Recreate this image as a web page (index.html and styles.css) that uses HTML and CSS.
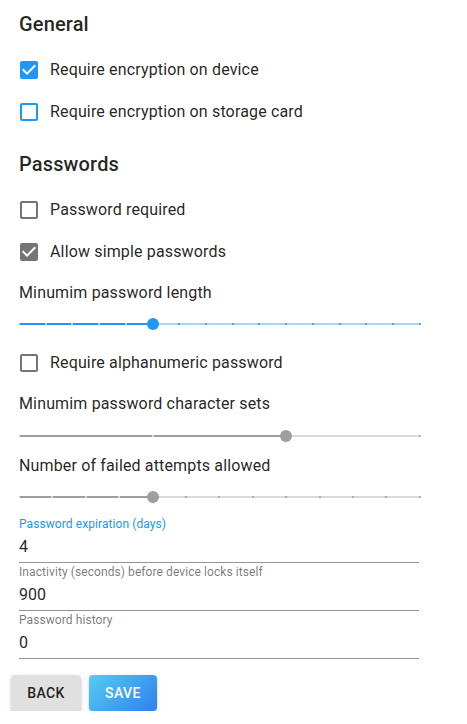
FILE: index.html
```html
<!DOCTYPE html>
<html lang="en">
<head>
<meta charset="utf-8">
<title>Policy</title>
<link rel="stylesheet" href="styles.css">
</head>
<body>
<main class="page">
  <h2 class="section-title">General</h2>
  <div class="check-list first">
    <label class="check-row">
      <svg class="cb cb-blue" viewBox="0 0 24 24"><path d="M19 3H5c-1.11 0-2 .9-2 2v14c0 1.1.89 2 2 2h14c1.11 0 2-.9 2-2V5c0-1.1-.89-2-2-2zm-9 14l-5-5 1.41-1.41L10 14.17l7.59-7.59L19 8l-9 9z"/></svg>
      <span>Require encryption on device</span>
    </label>
    <label class="check-row">
      <svg class="cb cb-blue" viewBox="0 0 24 24"><path d="M19 5v14H5V5h14m0-2H5c-1.1 0-2 .9-2 2v14c0 1.1.9 2 2 2h14c1.1 0 2-.9 2-2V5c0-1.1-.9-2-2-2z"/></svg>
      <span>Require encryption on storage card</span>
    </label>
  </div>

  <h2 class="section-title second">Passwords</h2>
  <div class="check-list first">
    <label class="check-row">
      <svg class="cb cb-grey" viewBox="0 0 24 24"><path d="M19 5v14H5V5h14m0-2H5c-1.1 0-2 .9-2 2v14c0 1.1.9 2 2 2h14c1.1 0 2-.9 2-2V5c0-1.1-.9-2-2-2z"/></svg>
      <span>Password required</span>
    </label>
    <label class="check-row">
      <svg class="cb cb-grey" viewBox="0 0 24 24"><path d="M19 3H5c-1.11 0-2 .9-2 2v14c0 1.1.89 2 2 2h14c1.11 0 2-.9 2-2V5c0-1.1-.89-2-2-2zm-9 14l-5-5 1.41-1.41L10 14.17l7.59-7.59L19 8l-9 9z"/></svg>
      <span>Allow simple passwords</span>
    </label>
  </div>

  <div class="slider-label l1">Minumim password length</div>
  <div class="slider s-blue g1">
    <div class="rail"></div>
    <div class="track" style="width:33.333%"></div>
    <div class="marks">
      <i class="on"></i><i class="on"></i><i class="on"></i><i class="on"></i><i class="on"></i><i class="on"></i>
      <i></i><i></i><i></i><i></i><i></i><i></i><i></i><i></i><i></i><i></i>
    </div>
    <div class="thumb" style="left:33.333%"></div>
  </div>

  <label class="check-row g2">
    <svg class="cb cb-grey" viewBox="0 0 24 24"><path d="M19 5v14H5V5h14m0-2H5c-1.1 0-2 .9-2 2v14c0 1.1.9 2 2 2h14c1.1 0 2-.9 2-2V5c0-1.1-.9-2-2-2z"/></svg>
    <span>Require alphanumeric password</span>
  </label>

  <div class="slider-label g3">Minumim password character sets</div>
  <div class="slider s-grey g4">
    <div class="rail"></div>
    <div class="track" style="width:66.667%"></div>
    <div class="marks">
      <i class="on"></i><i class="on"></i><i class="on"></i><i></i>
    </div>
    <div class="thumb" style="left:66.667%"></div>
  </div>

  <div class="slider-label g3">Number of failed attempts allowed</div>
  <div class="slider s-grey g1">
    <div class="rail"></div>
    <div class="track" style="width:33.333%"></div>
    <div class="marks">
      <i class="on"></i><i class="on"></i><i class="on"></i><i class="on"></i><i class="on"></i>
      <i></i><i></i><i></i><i></i><i></i><i></i><i></i><i></i>
    </div>
    <div class="thumb" style="left:33.333%"></div>
  </div>

  <div class="fields">
    <div class="field">
      <div class="field-label focused">Password expiration (days)</div>
      <div class="field-value">4</div>
    </div>
    <div class="field">
      <div class="field-label">Inactivity (seconds) before device locks itself</div>
      <div class="field-value">900</div>
    </div>
    <div class="field">
      <div class="field-label">Password history</div>
      <div class="field-value">0</div>
    </div>
  </div>

  <div class="actions">
    <button class="btn btn-back">Back</button>
    <button class="btn btn-save">Save</button>
  </div>
</main>
</body>
</html>
```

FILE: styles.css
```css
* { box-sizing: border-box; }

html, body {
  margin: 0;
  padding: 0;
  background: #ffffff;
}

body {
  font-family: Roboto, "Liberation Sans", Arial, sans-serif;
  color: rgba(0, 0, 0, 0.87);
  font-size: 16px;
}

.page {
  display: flex;
  flex-direction: column;
  padding: 12px 0 0 19px;
}

.section-title {
  margin: 0;
  font-size: 20px;
  line-height: 24px;
  font-weight: 500;
  letter-spacing: 0.15px;
}

.section-title.second { margin-top: 19px; }

.check-list {
  display: flex;
  flex-direction: column;
}

.check-list.first { margin-top: 13px; }

.check-row {
  height: 42px;
  display: flex;
  align-items: center;
  font-size: 16px;
  line-height: 20px;
  letter-spacing: 0.15px;
}

.cb {
  width: 24px;
  height: 24px;
  margin-left: -2px;
  margin-right: 9px;
  flex: none;
}

.cb-blue { fill: #2196f3; }
.cb-grey { fill: #757575; }

.slider-label {
  font-size: 16px;
  line-height: 20px;
  letter-spacing: 0.15px;
}

.l1 { margin-top: 10px; }
.g1 { margin-top: 11px; }
.g2 { margin-top: 8px; }
.g3 { margin-top: 10px; }
.g4 { margin-top: 12px; }

.slider {
  position: relative;
  width: 401px;
  height: 20px;
}

.rail, .track {
  position: absolute;
  left: 0;
  top: 9px;
  height: 2px;
}

.rail { width: 100%; }

.marks {
  position: absolute;
  left: -1px;
  right: -1px;
  top: 9px;
  height: 2px;
  display: flex;
  justify-content: space-between;
}

.marks i {
  display: block;
  width: 2px;
  height: 2px;
  border-radius: 1px;
}

.thumb {
  position: absolute;
  top: 4px;
  width: 12px;
  height: 12px;
  margin-left: -6px;
  border-radius: 50%;
}

.s-blue .rail { background: #a6d5fa; }
.s-blue .track { background: #2196f3; }
.s-blue .marks i { background: #2196f3; }
.s-blue .thumb { background: #2196f3; }

.s-grey .rail { background: #dadada; }
.s-grey .track { background: #9e9e9e; }
.s-grey .marks i { background: #9e9e9e; }
.s-grey .thumb { background: #9e9e9e; }

.s-blue .marks i.on, .s-grey .marks i.on { background: rgba(255, 255, 255, 0.8); }

.fields {
  display: flex;
  flex-direction: column;
  margin-top: 10px;
  width: 400px;
}

.field {
  border-bottom: 1px solid rgba(0, 0, 0, 0.42);
  margin-bottom: 2px;
}

.field-label {
  font-size: 12px;
  line-height: 14px;
  letter-spacing: 0.08px;
  color: rgba(0, 0, 0, 0.54);
}

.field-label.focused { color: #2196f3; }

.field-value {
  height: 31px;
  line-height: 31px;
  font-size: 16px;
  color: rgba(0, 0, 0, 0.87);
}

.actions {
  display: flex;
  gap: 8px;
  margin-top: 14px;
  margin-left: -8px;
}

.btn {
  height: 36px;
  padding: 0 16px;
  border: none;
  border-radius: 4px;
  font-family: Roboto, "Liberation Sans", Arial, sans-serif;
  font-size: 14px;
  font-weight: 500;
  letter-spacing: 0.4px;
  text-transform: uppercase;
  box-shadow: 0 3px 1px -2px rgba(0,0,0,0.2), 0 2px 2px 0 rgba(0,0,0,0.14), 0 1px 5px 0 rgba(0,0,0,0.12);
}

.btn-back {
  background: #e0e0e0;
  color: rgba(0, 0, 0, 0.87);
  min-width: 70px;
}

.btn-save {
  background: linear-gradient(135deg, #56ccf2 0%, #2f80ed 100%);
  color: #ffffff;
  min-width: 67px;
}
```
